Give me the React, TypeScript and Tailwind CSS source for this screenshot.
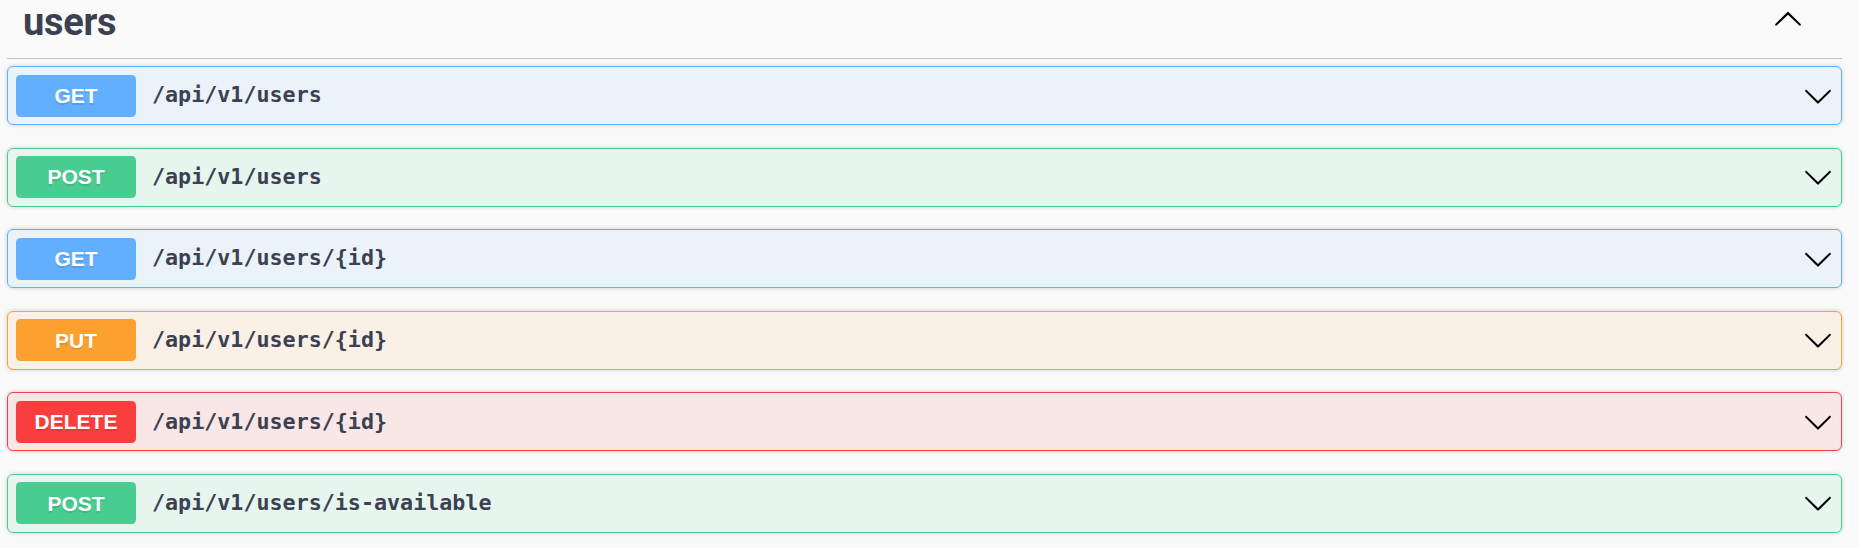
import React from "react";

type Op = { method: string; path: string; badge: string; bg: string; border: string };

const ops: Op[] = [
  { method: "GET", path: "/api/v1/users", badge: "bg-[#61affe]", bg: "bg-[#61affe]/10", border: "border-[#61affe]" },
  { method: "POST", path: "/api/v1/users", badge: "bg-[#49cc90]", bg: "bg-[#49cc90]/10", border: "border-[#49cc90]" },
  { method: "GET", path: "/api/v1/users/{id}", badge: "bg-[#61affe]", bg: "bg-[#61affe]/10", border: "border-[#61affe]" },
  { method: "PUT", path: "/api/v1/users/{id}", badge: "bg-[#fca130]", bg: "bg-[#fca130]/10", border: "border-[#fca130]" },
  { method: "DELETE", path: "/api/v1/users/{id}", badge: "bg-[#f93e3e]", bg: "bg-[#f93e3e]/10", border: "border-[#f93e3e]" },
  { method: "POST", path: "/api/v1/users/is-available", badge: "bg-[#49cc90]", bg: "bg-[#49cc90]/10", border: "border-[#49cc90]" },
];

function ArrowDown() {
  return (
    <svg width="30" height="30" viewBox="0 0 20 20" className="shrink-0">
      <path
        fill="#000"
        d="M17.418 6.109c.272-.268.709-.268.979 0s.271.701 0 .969l-7.908 7.83c-.27.268-.707.268-.979 0l-7.908-7.83c-.27-.268-.27-.701 0-.969.271-.268.709-.268.979 0L10 13.25l7.418-7.141z"
      />
    </svg>
  );
}

function ArrowUp() {
  return (
    <svg width="30" height="30" viewBox="0 0 20 20" className="shrink-0">
      <path
        fill="#000"
        d="M17.418 14.908c.272.268.709.268.979 0s.271-.701 0-.969l-7.908-7.83c-.27-.268-.707-.268-.979 0l-7.908 7.83c-.27.268-.27.701 0 .969.271.268.709.268.979 0L10 7.767l7.418 7.141z"
      />
    </svg>
  );
}

export default function App() {
  return (
    <div className="min-h-screen w-full bg-[#fafafa] pl-[7px] pr-[17px]">
      <div className="flex h-[59px] items-start justify-between border-b border-[#c1c3c7]">
        <h3
          className="pl-[16px] pt-[3px] text-[38px] font-bold leading-[38px] tracking-[-0.3px] text-[#3b4151]"
          style={{ fontFamily: "Roboto, 'Liberation Sans', sans-serif" }}
        >
          users
        </h3>
        <div className="mr-[39px] mt-[3px]">
          <ArrowUp />
        </div>
      </div>
      <div className="mt-[7px] flex flex-col gap-[22.6px]">
        {ops.map((op, i) => (
          <div
            key={i}
            className={`flex h-[59px] items-center rounded-[6px] border ${op.border} ${op.bg} px-[8px] shadow-[0_0_4.5px_rgba(0,0,0,0.19)]`}
          >
            <div
              className={`flex h-[42px] w-[120px] shrink-0 items-center justify-center rounded-[4.5px] ${op.badge} text-[21px] font-bold text-white [text-shadow:0_1.5px_0_rgba(0,0,0,0.1)]`}
              style={{ fontFamily: "'Liberation Sans', Arial, sans-serif" }}
            >
              {op.method}
            </div>
            <div
              className="flex-1 pl-[16px] text-[21.7px] font-bold text-[#3b4151]"
              style={{ fontFamily: "'DejaVu Sans Mono', monospace" }}
            >
              {op.path}
            </div>
            <ArrowDown />
          </div>
        ))}
      </div>
    </div>
  );
}
